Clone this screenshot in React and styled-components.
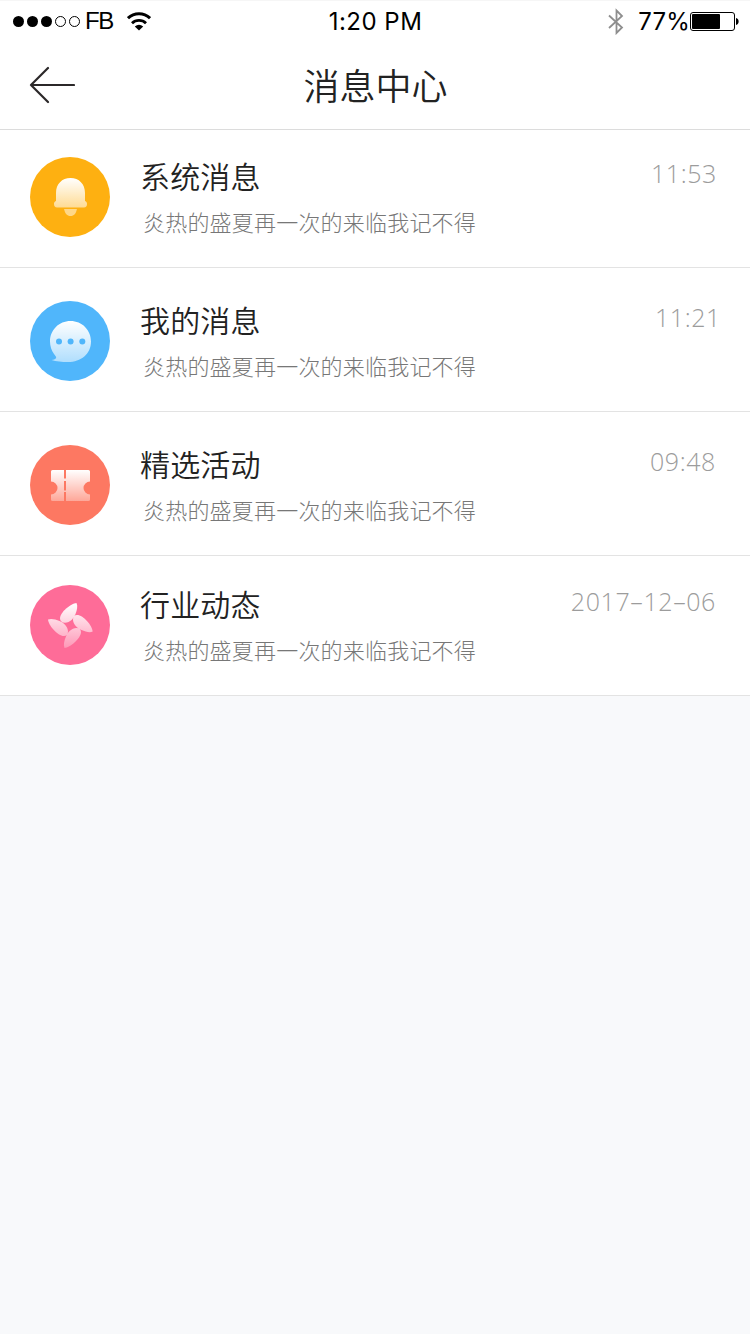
import React from "react";
import styled, { createGlobalStyle } from "styled-components";

const GlobalStyle = createGlobalStyle`
  * {
    box-sizing: border-box;
  }
  body {
    margin: 0;
    background: #f8f9fb;
    font-family: "Noto Sans CJK SC", sans-serif;
  }
`;

const Screen = styled.div`
  width: 750px;
  min-height: 1334px;
  background: #f8f9fb;
`;

const Header = styled.header`
  height: 130px;
  background: #fff;
  border-top: 1px solid #f6f6f6;
  border-bottom: 1px solid #dcdcdc;
`;

const StatusBar = styled.div`
  height: 40px;
  padding: 0 10px 0 12px;
  display: grid;
  grid-template-columns: 1fr auto 1fr;
  align-items: center;
  font-family: Inter, sans-serif;
  font-size: 24px;
  line-height: 38px;
  color: #000;
`;

const StatusGroup = styled.div`
  height: 40px;
  display: flex;
  align-items: center;
  justify-content: ${({ $end }) => ($end ? "flex-end" : "flex-start")};
`;

const Carrier = styled.span`
  margin: 0 14px 0 4px;
  font-family: "Liberation Sans", sans-serif;
  letter-spacing: -1.3px;
`;

const Clock = styled.span`
  padding: 1px 1px 0 0;
  letter-spacing: 0.5px;
`;

const Battery = styled.span`
  padding-top: 1px;
  margin-left: 14px;
  letter-spacing: 0.2px;
`;

const NavBar = styled.div`
  height: 88px;
  padding: 0 28px 0 29px;
  display: grid;
  grid-template-columns: 46px 1fr 46px;
  align-items: center;
`;

const BackButton = styled.button`
  height: 40px;
  padding: 0;
  border: none;
  background: none;
  display: flex;
  align-items: center;
`;

const NavTitle = styled.h1`
  margin: 0;
  padding-bottom: 1px;
  font-size: 36px;
  font-weight: 350;
  line-height: 87px;
  text-align: center;
  color: #222;
`;

const List = styled.ul`
  margin: 0;
  padding: 0;
  list-style: none;
`;

const Row = styled.li`
  padding: ${({ $top }) => $top}px 0 30px 30px;
  display: flex;
  background: #fff;
  border-bottom: 1px solid #e3e3e3;
`;

const Avatar = styled.div`
  width: 80px;
  height: 80px;
  border-radius: 50%;
  background: ${({ $color }) => $color};

  svg {
    display: block;
  }
`;

const Content = styled.div`
  flex: 1;
  height: 80px;
  padding-left: 30px;
`;

const Title = styled.h2`
  margin: 0;
  font-size: 30px;
  font-weight: 350;
  line-height: 36px;
  letter-spacing: 0.15px;
  color: #222;
`;

const Summary = styled.p`
  margin: 11px 0 0 3px;
  font-size: 22px;
  font-weight: 200;
  line-height: 34px;
  letter-spacing: 0.2px;
  color: #777;
`;

const Time = styled.time`
  padding-right: ${({ $right }) => $right}px;
  font-family: "Open Sans", sans-serif;
  font-size: 25px;
  font-weight: 300;
  letter-spacing: 0.6px;
  line-height: 32px;
  color: #9c9c9c;
`;

const Fade = ({ id, to = 0.55 }) => (
  <defs>
    <linearGradient id={id} x1="0" y1="0" x2="0" y2="1">
      <stop offset="0" stopColor="#fff" />
      <stop offset="1" stopColor="#fff" stopOpacity={to} />
    </linearGradient>
  </defs>
);

const BellIcon = () => (
  <svg width="80" height="80" viewBox="0 0 80 80">
    <Fade id="bell" />
    <path
      fill="url(#bell)"
      d="M26 44V36C26 27 32 21 40.500 21S55 27 55 36V44C56.500 44.500 57 45.500 57 47C57 49 56 50.500 54 50.500H27C25 50.500 24 49 24 47C24 45.500 24.500 44.500 26 44Z"
    />
    <path fill="#fff" fillOpacity="0.5" d="M34 52H47C46 56.500 44 59 40.500 59S35 56.500 34 52Z" />
  </svg>
);

const ChatIcon = () => (
  <svg width="80" height="80" viewBox="0 0 80 80">
    <Fade id="chat" />
    <path
      fill="url(#chat)"
      d="M40.500 20C52 20 61 29 61 40.500C61 53 51 61 38 61C32 61 26 60.500 21.500 59C24 58.700 26 58 26.200 56.500C26.300 55.500 25 54.500 24 53C21.500 49.500 20 45 20 40.500C20 29 29 20 40.500 20Z"
    />
    <g fill="#50b6fb">
      <circle cx="29" cy="40.500" r="3" />
      <circle cx="40.600" cy="40.500" r="3" />
      <circle cx="52.300" cy="40.500" r="3" />
    </g>
  </svg>
);

const TicketIcon = () => (
  <svg width="80" height="80" viewBox="0 0 80 80">
    <defs>
      <linearGradient id="ticket" gradientUnits="userSpaceOnUse" x1="0" y1="25" x2="0" y2="56">
        <stop offset="0" stopColor="#fff" />
        <stop offset="1" stopColor="#fff" stopOpacity="0.35" />
      </linearGradient>
    </defs>
    <g fill="url(#ticket)">
      <path d="M22.500 25H34V33.500H36V36H34V45.500H36V47H34V56H22.500Q21 56 21 54.500V49.500A6.500 6.500 0 0 0 21 36.500V26.500Q21 25 22.500 25Z" />
      <path d="M36 25H58.500Q60 25 60 26.500V36.500A6.500 6.500 0 0 0 60 49.500V54.500Q60 56 58.500 56H36Z" />
    </g>
  </svg>
);

const PetalIcon = () => (
  <svg width="80" height="80" viewBox="0 0 80 80">
    <defs>
      <linearGradient id="petal" gradientUnits="userSpaceOnUse" x1="0" y1="18" x2="0" y2="63">
        <stop offset="0" stopColor="#fff" />
        <stop offset="1" stopColor="#fff" stopOpacity="0.3" />
      </linearGradient>
    </defs>
    <g fill="url(#petal)">
      <path d="M46.500 18C41 18.500 30 27 30 33.500C30 36 32 37.800 35 37.800C40 37.800 44 33 45.500 29C47 25 48 21 46.500 18Z" />
      <path d="M62.700 46.500C62.500 41 53.500 30 47 30C44.500 30 43 32 43 34.500C43 39.500 47.500 43.500 51.500 45C55.500 46.800 60 48 62.700 46.500Z" />
      <path d="M34.500 63C40 62.500 51 53.500 51 47C51 44.500 49 43 46.500 43C41.500 43 37.500 47.500 36 51.500C34.200 55.500 33.200 60 34.500 63Z" />
      <path d="M18 34.500C18.300 40 27.500 51 34 51C36.500 51 38 49 38 46.500C38 41.500 33.500 37.500 29.500 36C25.500 34.200 21 33.200 18 34.500Z" />
    </g>
  </svg>
);

const SignalDots = () => (
  <svg width="69" height="14" viewBox="0 0 69 14">
    {[6.5, 20.5, 34.5].map((x) => (
      <circle key={x} cx={x} cy="7.500" r="5.500" />
    ))}
    {[48.5, 62.5].map((x) => (
      <circle key={x} cx={x} cy="7.500" r="5" fill="none" stroke="#000" />
    ))}
  </svg>
);

const WifiIcon = () => (
  <svg width="24" height="20" viewBox="0 0 24 20">
    <g fill="none" stroke="#000" strokeWidth="3">
      <path d="M1 7.200A16 16 0 0 1 23 7.200" />
      <path d="M5 12.200A10 10 0 0 1 19 12.200" strokeWidth="2.800" />
    </g>
    <path d="M7.800 15.500Q12 11.800 16.200 15.500L12 19.500Z" />
  </svg>
);

const BluetoothIcon = () => (
  <svg width="16" height="28" viewBox="0 0 16 28">
    <path
      d="M1 8.500L14 20.500L8.500 26V3.500L14 9L1 21"
      fill="none"
      stroke="#8e8e8e"
      strokeWidth="1.800"
    />
  </svg>
);

const BatteryIcon = () => (
  <svg width="50" height="20" viewBox="0 0 50 20">
    <rect x="0.500" y="1.500" width="44" height="18" rx="2.500" fill="none" stroke="#000" />
    <rect x="2" y="3" width="28" height="15" rx="1" />
    <path d="M46 7C49.500 7.500 49.500 13.500 46 14Z" />
  </svg>
);

const ArrowIcon = () => (
  <svg width="46" height="38" viewBox="0 0 46 38">
    <path
      d="M19 2L2 19L19 36M2 19H45"
      fill="none"
      stroke="#2b2829"
      strokeWidth="2.200"
      strokeLinecap="round"
      strokeLinejoin="round"
    />
  </svg>
);

const summary = "炎热的盛夏再一次的来临我记不得";

const messages = [
  { title: "系统消息", time: "11:53", color: "#feb011", Icon: BellIcon, top: 27, right: 33 },
  { title: "我的消息", time: "11:21", color: "#50b6fb", Icon: ChatIcon, top: 33, right: 29 },
  { title: "精选活动", time: "09:48", color: "#fd7862", Icon: TicketIcon, top: 33, right: 34 },
  { title: "行业动态", time: "2017–12–06", color: "#fe6c98", Icon: PetalIcon, top: 29, right: 34 },
];

export default function App() {
  return (
    <Screen>
      <GlobalStyle />
      <Header>
        <StatusBar>
          <StatusGroup>
            <SignalDots />
            <Carrier>FB</Carrier>
            <WifiIcon />
          </StatusGroup>
          <Clock>1:20 PM</Clock>
          <StatusGroup $end>
            <BluetoothIcon />
            <Battery>77%</Battery>
            <BatteryIcon />
          </StatusGroup>
        </StatusBar>
        <NavBar>
          <BackButton aria-label="返回">
            <ArrowIcon />
          </BackButton>
          <NavTitle>消息中心</NavTitle>
        </NavBar>
      </Header>
      <List>
        {messages.map(({ title, time, color, Icon, top, right }) => (
          <Row key={title} $top={top}>
            <Avatar $color={color}>
              <Icon />
            </Avatar>
            <Content>
              <Title>{title}</Title>
              <Summary>{summary}</Summary>
            </Content>
            <Time $right={right}>{time}</Time>
          </Row>
        ))}
      </List>
    </Screen>
  );
}
